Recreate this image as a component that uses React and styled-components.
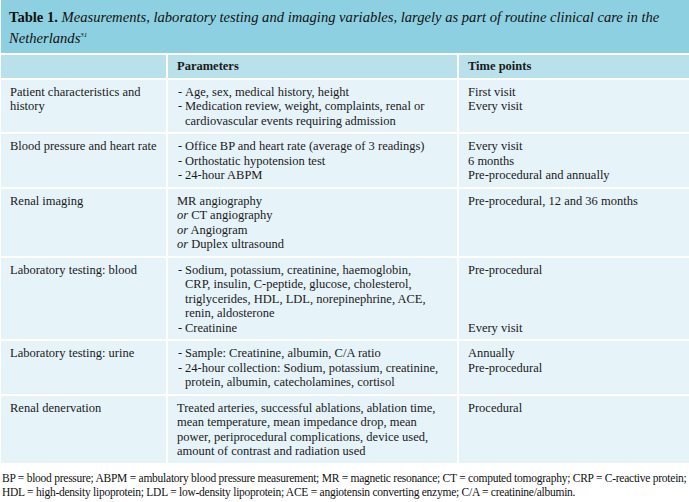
import React from "react";
import styled, { createGlobalStyle } from "styled-components";

const GlobalStyle = createGlobalStyle`
  html, body {
    margin: 0;
    padding: 0;
    background: #fff;
  }
  body {
    font-family: 'Liberation Serif', 'Times New Roman', serif;
    color: #1a1a1a;
  }
`;

const Page = styled.div`
  width: 689px;
  padding-left: 1px;
  box-sizing: border-box;
`;

const Caption = styled.div`
  background: #8dd0e1;
  height: 53px;
  box-sizing: border-box;
  padding: 7px 8px 0 8px;
  font-size: 14.6px;
  line-height: 21px;
  color: #111;
  white-space: nowrap;
`;

const CaptionLine = styled.div``;

const CaptionLabel = styled.b``;

const CaptionText = styled.i``;

const Sup = styled.span`
  font-size: 7px;
  position: relative;
  top: -6px;
  font-style: italic;
`;

const Grid = styled.div`
  display: grid;
  grid-template-columns: 165px 289px 1fr;
  gap: 2px;
  padding-top: 2px;
  background: #fff;
`;

const Cell = styled.div`
  background: ${(p) => (p.$head ? "#b9e1eb" : "#e6f3f9")};
  padding: ${(p) => (p.$head ? "4px 9px 4px" : "5px 9px 4px")};
  font-size: 12.5px;
  line-height: 14.5px;
  font-weight: ${(p) => (p.$head ? "bold" : "normal")};
  white-space: nowrap;
`;

const Line = styled.div`
  padding-left: ${(p) => (p.$dash || p.$indent ? "8px" : "0")};
  position: relative;
  &::before {
    content: ${(p) => (p.$dash ? '"-"' : "none")};
    position: absolute;
    left: 1px;
    top: 0;
  }
`;

const Or = styled.i``;

const Footnote = styled.div`
  padding: 8px 0 0 1px;
  font-size: 11.5px;
  line-height: 14px;
  letter-spacing: -0.25px;
  color: #111;
  white-space: nowrap;
`;

const rows = [
  {
    label: ["Patient characteristics and", "history"],
    params: [
      { dash: true, text: "Age, sex, medical history, height" },
      { dash: true, text: "Medication review, weight, complaints, renal or" },
      { indent: true, text: "cardiovascular events requiring admission" },
    ],
    times: ["First visit", "Every visit"],
  },
  {
    label: ["Blood pressure and heart rate"],
    params: [
      { dash: true, text: "Office BP and heart rate (average of 3 readings)" },
      { dash: true, text: "Orthostatic hypotension test" },
      { dash: true, text: "24-hour ABPM" },
    ],
    times: ["Every visit", "6 months", "Pre-procedural and annually"],
  },
  {
    label: ["Renal imaging"],
    params: [
      { text: "MR angiography" },
      { or: true, text: " CT angiography" },
      { or: true, text: " Angiogram" },
      { or: true, text: " Duplex ultrasound" },
    ],
    times: ["Pre-procedural, 12 and 36 months"],
  },
  {
    label: ["Laboratory testing: blood"],
    params: [
      { dash: true, text: "Sodium, potassium, creatinine, haemoglobin," },
      { indent: true, text: "CRP, insulin, C-peptide, glucose, cholesterol," },
      { indent: true, text: "triglycerides, HDL, LDL, norepinephrine, ACE," },
      { indent: true, text: "renin, aldosterone" },
      { dash: true, text: "Creatinine" },
    ],
    times: ["Pre-procedural", "\u00a0", "\u00a0", "\u00a0", "Every visit"],
  },
  {
    label: ["Laboratory testing: urine"],
    params: [
      { dash: true, text: "Sample: Creatinine, albumin, C/A ratio" },
      { dash: true, text: "24-hour collection: Sodium, potassium, creatinine," },
      { indent: true, text: "protein, albumin, catecholamines, cortisol" },
    ],
    times: ["Annually", "Pre-procedural"],
  },
  {
    label: ["Renal denervation"],
    params: [
      { text: "Treated arteries, successful ablations, ablation time," },
      { text: "mean temperature, mean impedance drop, mean" },
      { text: "power, periprocedural complications, device used," },
      { text: "amount of contrast and radiation used" },
    ],
    times: ["Procedural"],
  },
];

export default function App() {
  return (
    <>
      <GlobalStyle />
      <Page>
        <Caption>
          <CaptionLine>
            <CaptionLabel>Table 1.</CaptionLabel>{" "}
            <CaptionText>
              Measurements, laboratory testing and imaging variables, largely as part of routine clinical care in the
            </CaptionText>
          </CaptionLine>
          <CaptionLine>
            <CaptionText>Netherlands</CaptionText>
            <Sup>31</Sup>
          </CaptionLine>
        </Caption>
        <Grid>
          <Cell $head />
          <Cell $head>Parameters</Cell>
          <Cell $head>Time points</Cell>
          {rows.map((r, i) => (
            <React.Fragment key={i}>
              <Cell>
                {r.label.map((l, j) => (
                  <Line key={j}>{l}</Line>
                ))}
              </Cell>
              <Cell>
                {r.params.map((p, j) => (
                  <Line key={j} $dash={p.dash} $indent={p.indent}>
                    {p.or && <Or>or</Or>}
                    {p.text}
                  </Line>
                ))}
              </Cell>
              <Cell>
                {r.times.map((t, j) => (
                  <Line key={j}>{t}</Line>
                ))}
              </Cell>
            </React.Fragment>
          ))}
        </Grid>
        <Footnote>
          BP = blood pressure; ABPM = ambulatory blood pressure measurement; MR = magnetic resonance; CT = computed tomography; CRP = C-reactive protein;
          <br />
          HDL = high-density lipoprotein; LDL = low-density lipoprotein; ACE = angiotensin converting enzyme; C/A = creatinine/albumin.
        </Footnote>
      </Page>
    </>
  );
}
